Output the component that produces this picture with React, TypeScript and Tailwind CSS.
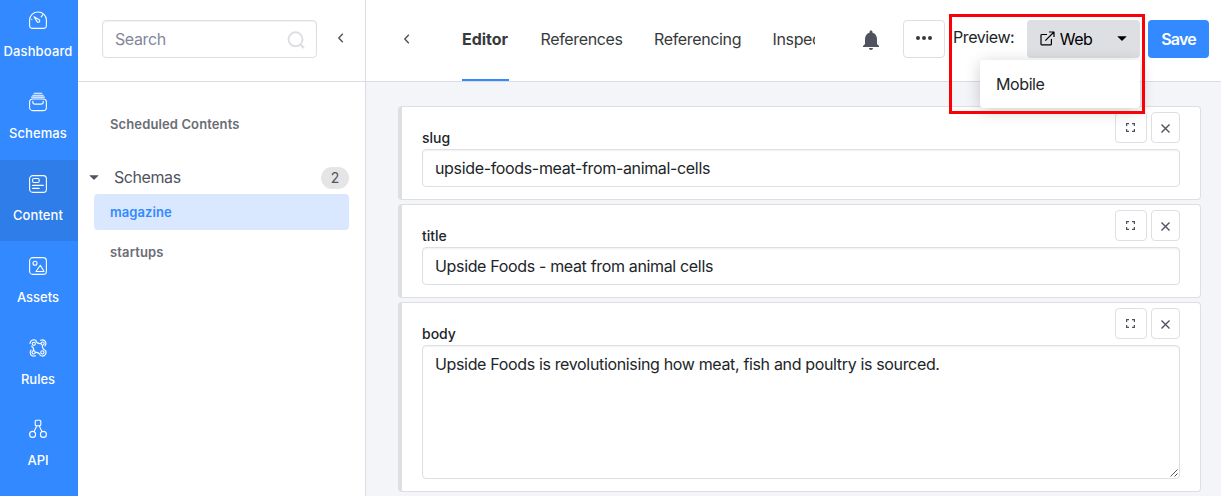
import type { ReactNode } from 'react';

const svgBase = {
  width: 20,
  height: 20,
  viewBox: '0 0 20 20',
  fill: 'none',
  stroke: 'currentColor',
  strokeWidth: 1.1,
  strokeLinecap: 'round' as const,
  strokeLinejoin: 'round' as const,
};

const DashboardIcon = () => (
  <svg {...svgBase}>
    <path d="M1.6 10a8.4 8 0 0 1 16.8 0v5.2q0 3.2-3.2 3.2H4.8q-3.2 0-3.2-3.2z" />
    <path d="M6 6.8 10.9 9.4a1.5 1.5 0 1 1-2 2z" />
    <path d="M13.2 6.8 14.7 4.8M3.8 9.2v.2" />
  </svg>
);

const SchemasIcon = () => (
  <svg {...svgBase}>
    <rect x="1.6" y="7" width="16.8" height="11.6" rx="3.2" />
    <path d="M6.2 1.2h7.6M4.8 3.2h10.4M3.6 5.1h12.8" />
    <path d="M4.8 9.2v.7q0 2.2 2.2 2.2h6q2.2 0 2.2-2.2v-.7" />
  </svg>
);

const ContentIcon = () => (
  <svg {...svgBase}>
    <rect x="1.6" y="1.6" width="16.8" height="16.8" rx="3.2" />
    <rect x="4.6" y="4.5" width="6.6" height="4" rx="1.4" />
    <path d="M4.6 11.4h10.8M4.6 14.4h6.6" />
  </svg>
);

const AssetsIcon = () => (
  <svg {...svgBase}>
    <rect x="1.6" y="1.6" width="16.8" height="16.8" rx="3.2" />
    <circle cx="7" cy="7.3" r="2" />
    <path d="M8 15.5 12.3 9.3 16 15.5z" />
  </svg>
);

const RulesIcon = () => (
  <svg {...svgBase}>
    <circle cx="5.8" cy="5.8" r="1.6" />
    <circle cx="14.6" cy="5.6" r="1.6" />
    <circle cx="5.6" cy="14.4" r="1.6" />
    <circle cx="14.4" cy="14.4" r="1.6" />
    <path d="M8 3.600q2 2.400 4.800 1.900M7.400 14.400q2.800-.4 4.600 1.900M3.600 8.200q2.600 1.600 2 4.400M14.400 7.600q-.4 2.800 2.200 4.400" />
    <path d="M2 5.400Q2.600 1.800 6.400 1.800q1.200.2 1.800 1M12.600 2.200q3.200-1.200 5 1.400 1 2.200-.6 4.400M3 12q-1.800 2.400-.4 4.700 2 2.200 5 1.100M17.600 12.600q1.200 2.600-.8 4.600-2.200 1.700-4.600.2" />
  </svg>
);

const ApiIcon = () => (
  <svg {...svgBase}>
    <rect x="7.2" y="1.2" width="5.6" height="5.6" rx="1" />
    <circle cx="4.6" cy="15.4" r="3" />
    <circle cx="15.4" cy="15.4" r="3" />
    <path d="M8.7 6.9 6.1 12.5M11.3 6.9l2.6 5.6" />
  </svg>
);

const navItems = [
  { label: 'Dashboard', icon: <DashboardIcon />, style: 'tracking-[0.13px]' },
  { label: 'Schemas', icon: <SchemasIcon />, style: 'tracking-[0.08px]' },
  { label: 'Content', icon: <ContentIcon />, style: 'bg-[#2f7de9] tracking-[0.1px]' },
  { label: 'Assets', icon: <AssetsIcon />, style: '' },
  { label: 'Rules', icon: <RulesIcon />, style: '' },
  { label: 'API', icon: <ApiIcon />, style: '' },
];

function NavBar() {
  return (
    <nav className="-mt-1 flex w-[78px] shrink-0 flex-col bg-[#3389ff] text-white">
      {navItems.map((item) => (
        <a
          key={item.label}
          className={`flex h-[81.8px] shrink-0 flex-col items-center pr-[2px] pt-[14.4px] text-[13px] font-medium leading-5 ${item.style}`}
        >
          {item.icon}
          <span className="mt-[10.95px]">{item.label}</span>
        </a>
      ))}
    </nav>
  );
}

const ChevronLeft = () => (
  <svg width="7" height="12" viewBox="0 0 7 12" fill="none" stroke="#50535f" strokeWidth="1.4">
    <path d="M5.8 1.8 1.8 6l4 4.2" />
  </svg>
);

const Caret = ({ className }: { className: string }) => (
  <svg className={className} width="10" height="5" viewBox="0 0 10 5" fill="currentColor">
    <path d="M.8.2h8.4q.5.1.1.6L5.5 4.6q-.5.4-1 0L.7.8Q.3.3.8.2z" />
  </svg>
);

function ContentPanel() {
  return (
    <aside className="flex w-[288px] shrink-0 flex-col border-r border-[#dcdde3] bg-white">
      <div className="flex h-[82px] shrink-0 items-start border-b border-[#dcdde3] pl-6 pt-5">
        <div className="flex h-[38px] w-[215px] items-center justify-between rounded-[4px] border border-[#dedfe3] pl-3 pr-[11px] text-[16px] text-[#83869a] shadow-[inset_0_1px_2px_rgba(0,0,0,0.06)]">
          <span className="tracking-[-0.4px]">Search</span>
          <svg className="mt-[2px]" width="18" height="18" viewBox="0 0 18 18" fill="none" stroke="#dedfe4" strokeWidth="2">
            <circle cx="8.5" cy="8.3" r="7" />
            <path d="m13 13 3.8 4" strokeWidth="2.4" />
          </svg>
        </div>
        <span className="ml-5 mt-3">
          <ChevronLeft />
        </span>
      </div>
      <div className="flex flex-col px-4 pt-[25px] text-[13px] font-semibold text-[#6a6d75]">
        <a className="flex h-9 items-center px-4 tracking-[0.12px]">Scheduled Contents</a>
        <div className="mt-[16px] flex h-9 items-center text-[16px] font-normal text-[#50535f]">
          <Caret className="-ml-[5px]" />
          <span className="ml-[15px] grow tracking-[-0.42px]">Schemas</span>
          <span className="mt-[2px] flex h-[22px] w-7 items-center justify-center rounded-full bg-[#e5e5e6] pb-px text-[14px]">2</span>
        </div>
        <a className="-mt-px flex h-9 items-center rounded-[4px] bg-[#d9e8ff] px-4 pt-px tracking-[0.08px] text-[#3389ff]">magazine</a>
        <a className="mt-1 flex h-9 items-center px-4 pt-px tracking-[0.15px]">startups</a>
      </div>
    </aside>
  );
}

const tabs = [
  { label: 'Editor', style: 'font-bold border-b-2 border-[#3389ff] w-[47px] tracking-[-0.02px]' },
  { label: 'References', style: 'w-[82px] tracking-[-0.35px]' },
  { label: 'Referencing', style: 'w-[87px] tracking-[-0.35px]' },
  { label: 'Inspect', style: 'w-[60px] tracking-[-0.35px]' },
];

function Toolbar() {
  return (
    <header className="flex h-[82px] shrink-0 items-start border-b border-[#dcdde3] bg-white">
      <span className="ml-[36.5px] mt-[33px]">
        <ChevronLeft />
      </span>
      <div className="ml-[52.5px] flex w-[353px] gap-[31.5px] overflow-hidden text-[16px] text-[#373a3c]">
        {tabs.map((tab) => (
          <a key={tab.label} className={`flex h-[81px] shrink-0 items-start whitespace-nowrap pt-[27px] leading-6 ${tab.style}`}>
            {tab.label}
          </a>
        ))}
      </div>
      <svg className="ml-11 mt-7 text-[#50535f]" width="24" height="24" viewBox="0 0 24 24" fill="currentColor">
        <path d="M12 22c1.1 0 2-.9 2-2h-4c0 1.1.89 2 2 2zm6-6v-5c0-3.07-1.64-5.64-4.5-6.32V4c0-.83-.67-1.5-1.5-1.5s-1.5.67-1.5 1.5v.68C7.63 5.36 6 7.92 6 11v5l-2 2v1h16v-1l-2-2z" />
      </svg>
      <button className="ml-[20px] mt-5 flex h-[38px] w-[42px] items-center justify-center gap-[2px] rounded-[4px] border border-[#dedfe3] pb-[2px]">
        <i className="size-1 rounded-full bg-[#373a3c]" />
        <i className="size-1 rounded-full bg-[#373a3c]" />
        <i className="size-1 rounded-full bg-[#373a3c]" />
      </button>
      <span className="ml-2 mt-[25px] w-[74px] whitespace-nowrap text-[16px] leading-6 tracking-[-0.42px] text-[#212529]">Preview:</span>
      <div className="relative mt-5">
        <button className="flex h-[38px] w-[113px] items-center rounded-[4px] bg-[#dedfe3] pl-[13px] text-[16px] text-black">
          <svg className="-mt-[2px]" width="15" height="15" viewBox="0 0 15 15" fill="none" stroke="currentColor" strokeWidth="1.2" strokeLinejoin="round">
            <path d="M7 3.5H1.9q-.9 0-.9.9V13q0 .9.9.9h8.6q.9 0 .9-.9V8M9 1h5v5M14 1 5.3 9.7" />
          </svg>
          <span className="ml-1 w-[34px] tracking-[-0.5px]">Web</span>
          <Caret className="-mt-[2px] ml-6" />
        </button>
        <div className="absolute right-0 top-10 z-10 flex h-12 w-40 items-center rounded-[4px] bg-white pl-4 text-[16px] tracking-[-0.4px] text-[#212529] shadow-[0_3px_16px_rgba(0,0,0,0.2)]">
          Mobile
        </div>
        <div className="absolute -left-[78px] -top-[6px] z-20 h-[100px] w-[196px] border-3 border-[#fb0007]" />
      </div>
      <button className="ml-2 mt-5 h-[38px] w-[61px] rounded-[4px] bg-[#3389ff] text-[16px] font-semibold tracking-[-0.8px] text-white">
        Save
      </button>
    </header>
  );
}

function Field({ label, children }: { label: string; children: ReactNode }) {
  return (
    <section className="flex shrink-0 flex-col rounded-[4px] border border-l-4 border-[#dedfe3] bg-white pb-3 pl-5 pr-5">
      <div className="flex h-[42px] justify-between pt-[5px]">
        <label className="mt-4 text-[14px] font-medium leading-5 text-[#212529]">{label}</label>
        <div className="flex h-[31px] gap-1 text-[#50535f]">
          <button className="flex w-8 items-center justify-center rounded-[4px] border border-[#dedfe3] pb-px pr-px">
            <svg width="9" height="9" viewBox="0 0 9 9" fill="none" stroke="currentColor" strokeWidth="1.2">
              <path d="M.6 3V.6H3M6 .6h2.4V3M8.4 6v2.4H6M3 8.4H.6V6" />
            </svg>
          </button>
          <button className="flex w-[29px] items-center justify-center rounded-[4px] border border-[#dedfe3]">
            <svg className="mt-px" width="9" height="9" viewBox="0 0 9 9" fill="none" stroke="currentColor" strokeWidth="1.4">
              <path d="m.5.5 8 8M8.5.5l-8 8" />
            </svg>
          </button>
        </div>
      </div>
      {children}
    </section>
  );
}

const controlClass =
  'rounded-[4px] border border-[#dedfe3] px-3 text-[16px] leading-6 text-[#212529] shadow-[inset_0_1px_2px_rgba(0,0,0,0.06)]';

export default function App() {
  return (
    <div className="flex h-[496px] w-[1221px] overflow-hidden bg-[#f4f5f9] font-['Inter','Liberation_Sans',sans-serif]">
      <NavBar />
      <ContentPanel />
      <main className="flex w-[855px] shrink-0 flex-col">
        <Toolbar />
        <div className="flex flex-col gap-1 pl-8 pr-5 pt-6">
          <Field label="slug">
            <div className={`flex h-[38px] items-center tracking-[-0.34px] ${controlClass}`}>upside-foods-meat-from-animal-cells</div>
          </Field>
          <Field label="title">
            <div className={`flex h-[38px] items-center tracking-[-0.34px] ${controlClass}`}>Upside Foods - meat from animal cells</div>
          </Field>
          <Field label="body">
            <div className={`relative h-[134px] pt-[6px] tracking-[-0.345px] ${controlClass}`}>
              Upside Foods is revolutionising how meat, fish and poultry is sourced.
              <svg className="absolute bottom-px right-px" width="8" height="8" viewBox="0 0 8 8" stroke="#555" strokeWidth="1">
                <path d="M.5 7.5l7-7M4.5 7.5l3-3" />
              </svg>
            </div>
          </Field>
        </div>
      </main>
    </div>
  );
}
